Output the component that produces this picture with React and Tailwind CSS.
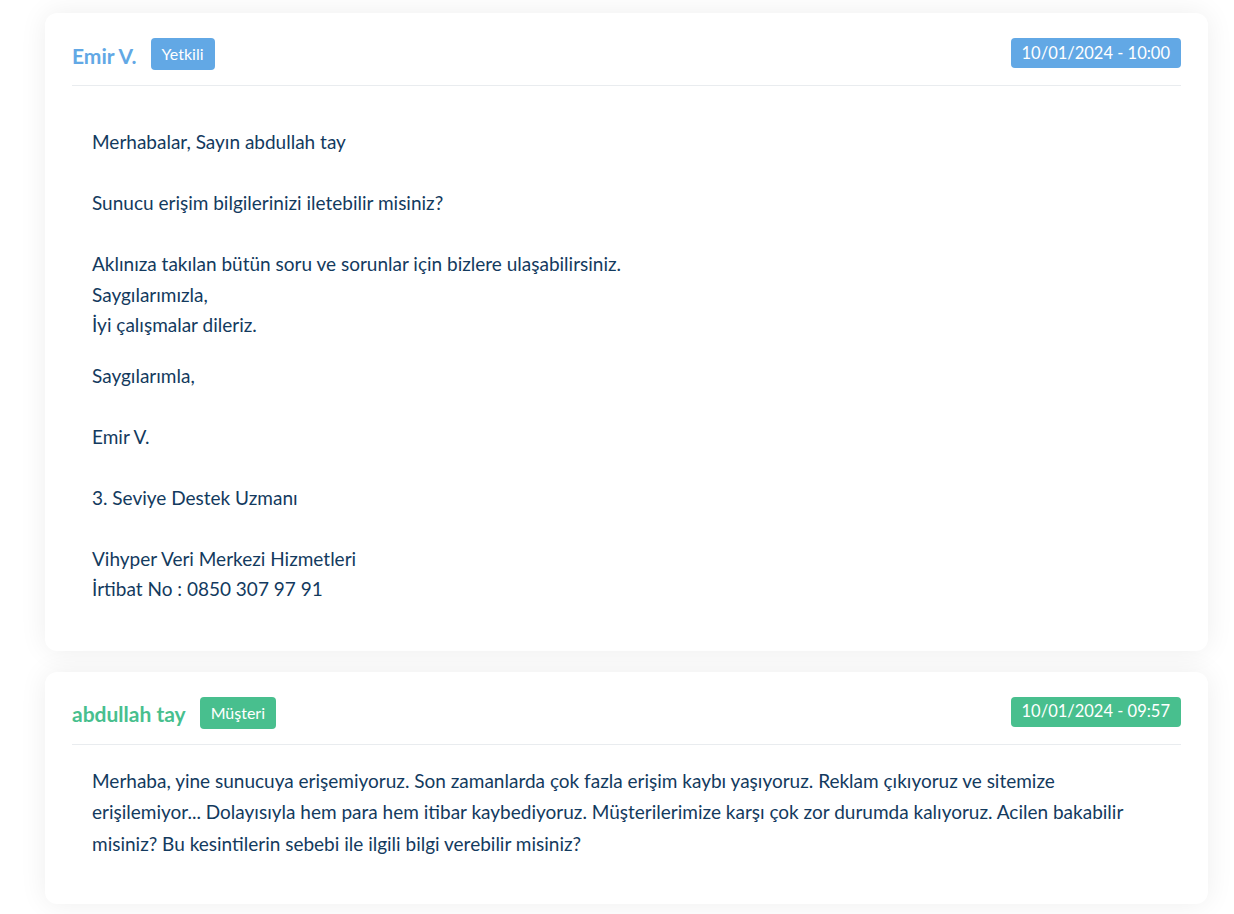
import React from 'react';

const FONT = "font-['Lato','Noto_Sans',sans-serif]";

const THEMES = {
  staff: { name: 'text-[#62a8e5]', badge: 'bg-[#62a8e5]' },
  customer: { name: 'text-[#48bf8e]', badge: 'bg-[#48bf8e]' },
};

const MessageCard = ({ author, role, date, theme, children }) => {
  const t = THEMES[theme];
  return (
    <div className="bg-white rounded-xl shadow-[0_0_28px_rgba(0,0,0,0.07)] px-[27px] pt-[25px]">
      <header className="flex justify-between items-start pb-[15px] border-b border-[#e9ecef]">
        <div className="flex items-center gap-[14px] h-[32px]">
          <h3 className={`text-[21px] font-bold ${t.name} leading-none mt-[2px]`}>{author}</h3>
          <span className={`${t.badge} text-white text-[16px] rounded-[4px] px-[11px] h-[32px] flex items-center`}>
            {role}
          </span>
        </div>
        <span className={`${t.badge} text-white text-[16.5px] rounded-[4px] px-[11px] h-[30px] flex items-center`}>
          {date}
        </span>
      </header>
      <div className="px-[20px] pb-[45px] text-[19px] leading-[30.5px] text-[#133a5e]">{children}</div>
    </div>
  );
};

export default function App() {
  return (
    <div className={`min-h-screen bg-white pl-[45px] pr-[26px] pt-[13px] pb-[11px] flex flex-col gap-[21px] ${FONT}`}>
      <MessageCard author="Emir V." role="Yetkili" date="10/01/2024 - 10:00" theme="staff">
        <div className="pt-[41px] pb-[1px]">
          <p>
            Merhabalar, Sayın abdullah tay
            <br />
            <br />
            Sunucu erişim bilgilerinizi iletebilir misiniz?
            <br />
            <br />
            Aklınıza takılan bütün soru ve sorunlar için bizlere ulaşabilirsiniz.
            <br />
            Saygılarımızla,
            <br />
            İyi çalışmalar dileriz.
          </p>
          <p className="mt-[20px]">
            Saygılarımla,
            <br />
            <br />
            Emir V.
            <br />
            <br />
            3. Seviye Destek Uzmanı
            <br />
            <br />
            Vihyper Veri Merkezi Hizmetleri
            <br />
            İrtibat No : 0850 307 97 91
          </p>
        </div>
      </MessageCard>

      <MessageCard author="abdullah tay" role="Müşteri" date="10/01/2024 - 09:57" theme="customer">
        <p className="pt-[20px] leading-[31.5px]">
          Merhaba, yine sunucuya erişemiyoruz. Son zamanlarda çok fazla erişim kaybı yaşıyoruz. Reklam çıkıyoruz ve sitemize
          <br />
          erişilemiyor... Dolayısıyla hem para hem itibar kaybediyoruz. Müşterilerimize karşı çok zor durumda kalıyoruz. Acilen bakabilir
          <br />
          misiniz? Bu kesintilerin sebebi ile ilgili bilgi verebilir misiniz?
        </p>
      </MessageCard>
    </div>
  );
}
